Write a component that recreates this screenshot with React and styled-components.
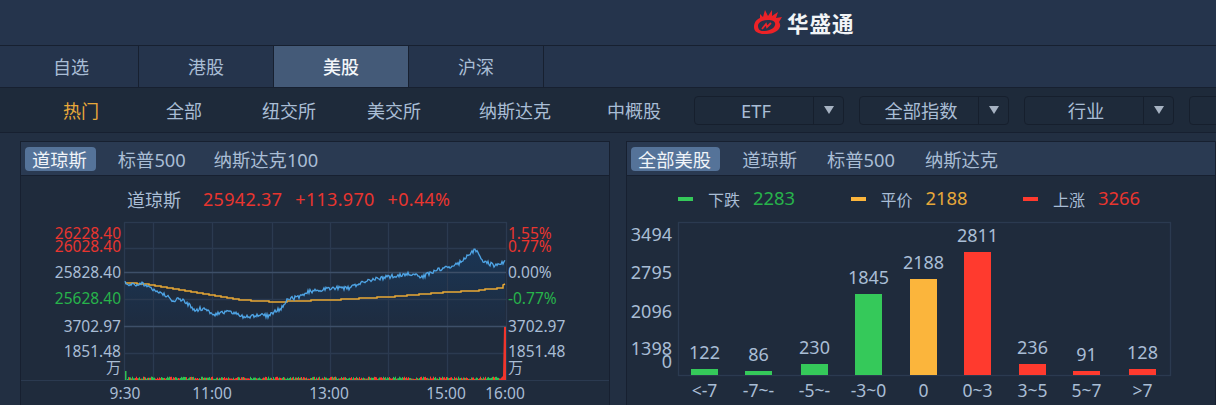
import React from "react";
import styled, { createGlobalStyle } from "styled-components";

const GlobalStyle = createGlobalStyle`
  html, body {
    margin: 0;
    padding: 0;
    background: #222f42;
    overflow: hidden;
  }
  body {
    font-family: "Noto Sans", "Noto Sans CJK SC", sans-serif;
  }
`;

const Page = styled.div`
  width: 1216px;
  height: 405px;
  overflow: hidden;
  background: #222f42;
  color: #a9bdd5;
`;

const Header = styled.header`
  height: 45px;
  background: #25344c;
  border-bottom: 1px solid #172030;
  display: flex;
  align-items: center;
  padding-left: 753px;
  gap: 4px;
`;

const BrandName = styled.span`
  color: #f2f4f7;
  font-size: 21.5px;
  font-weight: 700;
  letter-spacing: 1px;
  line-height: 1;
  margin-top: 2px;
`;

const TabRow = styled.nav`
  height: 41px;
  background: #25344c;
  display: flex;
  padding-left: 4px;
  border-bottom: 1px solid #172030;
`;

const MainTab = styled.div`
  width: 135px;
  border-right: 1px solid #172030;
  background: ${(p) => (p.$active ? "#445a78" : "transparent")};
  color: ${(p) => (p.$active ? "#f2f5f9" : "#a9bdd5")};
  font-weight: ${(p) => (p.$active ? 500 : 400)};
  font-size: 18px;
  padding-bottom: 2px;
  box-sizing: border-box;
  display: flex;
  align-items: center;
  justify-content: center;
`;

const SubNav = styled.div`
  height: 44px;
  background: #1e2a3a;
  border-bottom: 1px solid #172030;
  display: flex;
  align-items: center;
  padding-left: 63px;
  white-space: nowrap;
`;

const SubItem = styled.span`
  font-size: 18px;
  margin-left: ${(p) => p.$gap}px;
  color: ${(p) => (p.$active ? "#e8a93a" : "#a9bdd5")};
`;

const Select = styled.div`
  flex: none;
  width: 150px;
  height: 29px;
  box-sizing: border-box;
  margin-left: ${(p) => p.$gap}px;
  border: 1px solid #161f2d;
  border-radius: 4px;
  display: flex;
  font-size: 18.3px;
`;

const SelectLabel = styled.span`
  flex: 1;
  padding-left: 4px;
  display: flex;
  align-items: center;
  justify-content: center;
`;

const SelectArrow = styled.span`
  width: 29px;
  border-left: 1px solid #161f2d;
  display: flex;
  align-items: center;
  justify-content: center;
  &::after {
    content: "";
    border-left: 5px solid transparent;
    border-right: 5px solid transparent;
    border-top: 8px solid #a6b2c2;
  }
`;

const Panels = styled.main`
  display: flex;
  gap: 16px;
  padding: 8px 0 0 20px;
`;

const Panel = styled.section`
  flex: none;
  width: 590px;
  height: 270px;
  box-sizing: border-box;
  background: #1f2b3c;
  border-top: 1px solid #172030;
  border-left: 1px solid #172030;
  border-right: 1px solid #172030;
`;

const PanelTabs = styled.div`
  height: 34px;
  box-sizing: border-box;
  background: #2a3a52;
  border-bottom: 1px solid #172030;
  display: flex;
  align-items: center;
  gap: 15px;
  padding-left: 4px;
`;

const PanelTab = styled.span`
  height: 24px;
  padding: 0 9px 0 7px;
  margin-left: ${(p) => p.$pull || 0}px;
  border-radius: 4px;
  display: flex;
  align-items: center;
  font-size: 18.3px;
  background: ${(p) => (p.$active ? "#557399" : "transparent")};
  color: ${(p) => (p.$active ? "#f0f4f8" : "#a9bdd5")};
`;

const Summary = styled.div`
  height: 45px;
  display: flex;
  align-items: center;
  padding-left: 106px;
  gap: 13px;
  font-size: 18px;
  white-space: nowrap;
`;

const SummaryName = styled.span`
  margin-right: 9px;
`;

const Red = styled.span`
  color: #e8352f;
  letter-spacing: 0.3px;
`;

const Legend = styled.div`
  height: 45px;
  display: flex;
  align-items: center;
  padding-left: 51px;
  white-space: nowrap;
`;

const LegendItem = styled.div`
  width: 172.5px;
  display: flex;
  align-items: center;
  font-size: 16px;
`;

const LegendDash = styled.i`
  width: 15px;
  height: 4px;
  background: ${(p) => p.$color};
  margin-right: 15px;
`;

const LegendValue = styled.span`
  font-size: 18.4px;
  color: ${(p) => p.$color};
  margin-left: 13px;
  margin-top: -3px;
`;

const ChartSvg = styled.svg`
  display: block;
  font-family: "Noto Sans", "Noto Sans CJK SC", sans-serif;
  fill: #a9bdd5;
`;

const GRID = "#2b3a50";
const GRID_STRONG = "#3d4f68";

// small seeded generator so the tick noise is the same every run
function makeRandom(seed) {
  let s = seed;
  return () => {
    s = (s * 16807) % 2147483647;
    return s / 2147483647;
  };
}

function interpolate(points, x) {
  for (let i = 1; i < points.length; i++) {
    if (x <= points[i][0]) {
      const [x0, y0] = points[i - 1];
      const [x1, y1] = points[i];
      return y0 + ((y1 - y0) * (x - x0)) / (x1 - x0);
    }
  }
  return points[points.length - 1][1];
}

const bluePoints = [
  [125, 283], [132, 285], [142, 283], [152, 289], [165, 295], [172, 300], [182, 299],
  [195, 310], [205, 308], [214, 316], [222, 312], [235, 313], [245, 317], [258, 315],
  [268, 316], [283, 307], [288, 299], [300, 297], [306, 292], [320, 290], [330, 288],
  [350, 288], [360, 283], [375, 279], [395, 276], [410, 274], [422, 277], [432, 272],
  [447, 267], [458, 264], [465, 258], [475, 250], [483, 260], [490, 264], [497, 266], [505, 262],
];

const yellowPoints = [
  [125, 283], [150, 285], [180, 290], [212, 296], [240, 300], [272, 302], [290, 301],
  [320, 300], [350, 299], [400, 296], [430, 293], [470, 291], [498, 288], [505, 284],
];

function buildBlue() {
  const rnd = makeRandom(4711);
  const pts = [];
  for (let x = 125; x <= 505; x += 1) {
    pts.push([x, interpolate(bluePoints, x) + (rnd() - 0.5) * 4]);
  }
  return pts;
}

function buildYellow() {
  const pts = [];
  for (let x = 125; x <= 505; x += 6) {
    const y = Math.round(interpolate(yellowPoints, x));
    pts.push([x, y], [x + 6, y]);
  }
  pts.push([505, 284]);
  return pts.filter((p) => p[0] <= 505);
}

function buildVolume() {
  const rnd = makeRandom(99);
  const bars = [];
  for (let x = 127; x < 500; x += 1) {
    bars.push({ x, h: 1 + rnd() * 2.4, up: rnd() > 0.5 });
  }
  return bars;
}

const toPath = (pts) => pts.map((p, i) => `${i ? "L" : "M"}${p[0]} ${p[1].toFixed(1)}`).join(" ");

const blue = buildBlue();
const yellow = buildYellow();
const volume = buildVolume();

const RED = "#e8352f";
const GREEN = "#27b34b";
const GRAY = "#a9bdd5";

const leftAxis = [
  ["26228.40", 239, RED],
  ["26028.40", 252, RED],
  ["25828.40", 278, GRAY],
  ["25628.40", 304, GREEN],
  ["3702.97", 332, GRAY],
  ["1851.48", 357, GRAY],
];

const rightAxis = [
  ["1.55%", 239, RED],
  ["0.77%", 252, RED],
  ["0.00%", 278, GRAY],
  ["-0.77%", 304, GREEN],
  ["3702.97", 332, GRAY],
  ["1851.48", 357, GRAY],
];

const times = [
  ["9:30", 125],
  ["11:00", 212],
  ["13:00", 329],
  ["15:00", 446],
  ["16:00", 505],
];

function LineChart() {
  const area = `${toPath(blue)} L505 326 L125 326 Z`;
  return (
    <ChartSvg width="588" height="184" viewBox="21 221 588 184">
      <defs>
        <linearGradient id="areaFill" x1="0" y1="0" x2="0" y2="1">
          <stop offset="0" stopColor="#1a3554" />
          <stop offset="1" stopColor="#1e2c40" />
        </linearGradient>
      </defs>
      <path d={area} fill="url(#areaFill)" />
      <rect x="124.5" y="222.5" width="382" height="158" fill="none" stroke={GRID} strokeWidth="1.3" />
      {[153, 212, 272, 330, 388, 447].map((x) => (
        <line key={x} x1={x + 0.5} x2={x + 0.5} y1="222" y2="380" stroke={GRID} strokeWidth="1.3" />
      ))}
      {[248, 299, 353].map((y) => (
        <line key={y} x1="124" x2="506" y1={y + 0.5} y2={y + 0.5} stroke={GRID} strokeWidth="1.3" />
      ))}
      {[272, 326].map((y) => (
        <line key={y} x1="124" x2="506" y1={y + 0.5} y2={y + 0.5} stroke={GRID_STRONG} strokeWidth="1.4" />
      ))}
      <line x1="21" x2="609" y1="380.5" y2="380.5" stroke={GRID} />

      <path d={toPath(yellow)} fill="none" stroke="#eaa934" strokeWidth="1.5" />
      <path d={toPath(blue)} fill="none" stroke="#4fa5e6" strokeWidth="1.3" />

      {volume.map((b) => (
        <rect key={b.x} x={b.x} y={380 - b.h} width="1" height={b.h} fill={b.up ? "#ff3a2e" : "#2fc052"} />
      ))}
      <rect x="125" y="371" width="1.5" height="9" fill="#2fc052" />
      <path d="M499 380 L503 376 L504 327 L506 327 L506 380 Z" fill="#f0352c" />

      {leftAxis.map(([label, y, color]) => (
        <text key={label} x="121" y={y} fontSize="15.5" textAnchor="end" fill={color}>{label}</text>
      ))}
      <text x="121" y="373" fontSize="15" textAnchor="end">万</text>
      {rightAxis.map(([label, y, color]) => (
        <text key={label} x="508" y={y} fontSize="15.5" fill={color}>{label}</text>
      ))}
      <text x="508" y="373" fontSize="15">万</text>
      {times.map(([label, x]) => (
        <text key={label} x={x} y="399" fontSize="15.5" textAnchor="middle">{label}</text>
      ))}
    </ChartSvg>
  );
}

const BAR_GREEN = "#35c95a";
const BAR_YELLOW = "#fbb53c";
const BAR_RED = "#ff3a2e";

const bars = [
  { value: 122, label: "<-7", x: 691, top: 369, color: BAR_GREEN },
  { value: 86, label: "-7~-", x: 745, top: 371, color: BAR_GREEN },
  { value: 230, label: "-5~-", x: 801, top: 364, color: BAR_GREEN },
  { value: 1845, label: "-3~0", x: 855, top: 294, color: BAR_GREEN },
  { value: 2188, label: "0", x: 910, top: 279, color: BAR_YELLOW },
  { value: 2811, label: "0~3", x: 964, top: 252, color: BAR_RED },
  { value: 236, label: "3~5", x: 1019, top: 364, color: BAR_RED },
  { value: 91, label: "5~7", x: 1073, top: 371, color: BAR_RED },
  { value: 128, label: ">7", x: 1129, top: 369, color: BAR_RED },
];

const yTicks = [
  ["3494", 241],
  ["2795", 279],
  ["2096", 318],
  ["1398", 355],
  ["0", 368],
];

function BarChart() {
  return (
    <ChartSvg width="588" height="184" viewBox="627 221 588 184">
      <rect x="678.5" y="222.5" width="492" height="153" fill="none" stroke={GRID} strokeWidth="1.3" />
      {yTicks.map(([label, y]) => (
        <text key={label} x="672" y={y} fontSize="18" textAnchor="end">{label}</text>
      ))}
      {bars.map((b) => (
        <g key={b.label}>
          <rect x={b.x} y={b.top} width="27" height={375 - b.top} fill={b.color} />
          <text x={b.x + 13.5} y={b.top - 10} fontSize="18" textAnchor="middle">{b.value}</text>
          <text x={b.x + 13.5} y="397" fontSize="17.5" textAnchor="middle">{b.label}</text>
        </g>
      ))}
    </ChartSvg>
  );
}

function Logo() {
  return (
    <svg width="30" height="25" viewBox="0 0 30 25">
      <path
        fillRule="evenodd"
        fill="#ec2227"
        d="M1 17 C1 12 4 9 7 8 L7 4 L10 7 L12 0 L15 6 L19 0 L19 6 L25 2 L23 8 L29 7 L26 12 C29 16 26 21 20 23 C13 25 1 25 1 17 Z M5 16 C5 12 10 10 15 10 C20 10 23 12 22 15 C21 19 15 21 10 21 C7 21 5 19 5 16 Z"
      />
      <path d="M9 19 L13 14 L14 17 L18 13" fill="none" stroke="#ec2227" strokeWidth="1.8" />
    </svg>
  );
}

const subItems = [
  { label: "热门", gap: 0, active: true },
  { label: "全部", gap: 67 },
  { label: "纽交所", gap: 60 },
  { label: "美交所", gap: 51 },
  { label: "纳斯达克", gap: 58 },
  { label: "中概股", gap: 56 },
];

export default function App() {
  return (
    <Page>
      <GlobalStyle />
      <Header>
        <Logo />
        <BrandName>华盛通</BrandName>
      </Header>
      <TabRow>
        <MainTab>自选</MainTab>
        <MainTab>港股</MainTab>
        <MainTab $active>美股</MainTab>
        <MainTab>沪深</MainTab>
      </TabRow>
      <SubNav>
        {subItems.map((item) => (
          <SubItem key={item.label} $gap={item.gap} $active={item.active}>{item.label}</SubItem>
        ))}
        <Select $gap={33}><SelectLabel>ETF</SelectLabel><SelectArrow /></Select>
        <Select $gap={15}><SelectLabel>全部指数</SelectLabel><SelectArrow /></Select>
        <Select $gap={15}><SelectLabel>行业</SelectLabel><SelectArrow /></Select>
        <Select $gap={15}><SelectLabel /><SelectArrow /></Select>
      </SubNav>
      <Panels>
        <Panel>
          <PanelTabs>
            <PanelTab $active>道琼斯</PanelTab>
            <PanelTab>标普500</PanelTab>
            <PanelTab $pull={-3}>纳斯达克100</PanelTab>
          </PanelTabs>
          <Summary>
            <SummaryName>道琼斯</SummaryName>
            <Red>25942.37</Red>
            <Red>+113.970</Red>
            <Red>+0.44%</Red>
          </Summary>
          <LineChart />
        </Panel>
        <Panel>
          <PanelTabs>
            <PanelTab $active>全部美股</PanelTab>
            <PanelTab>道琼斯</PanelTab>
            <PanelTab $pull={-1}>标普500</PanelTab>
            <PanelTab $pull={-1}>纳斯达克</PanelTab>
          </PanelTabs>
          <Legend>
            <LegendItem>
              <LegendDash $color={BAR_GREEN} />下跌<LegendValue $color={GREEN}>2283</LegendValue>
            </LegendItem>
            <LegendItem>
              <LegendDash $color={BAR_YELLOW} />平价<LegendValue $color="#e6a83a">2188</LegendValue>
            </LegendItem>
            <LegendItem>
              <LegendDash $color={BAR_RED} />上涨<LegendValue $color={RED}>3266</LegendValue>
            </LegendItem>
          </Legend>
          <BarChart />
        </Panel>
      </Panels>
    </Page>
  );
}
